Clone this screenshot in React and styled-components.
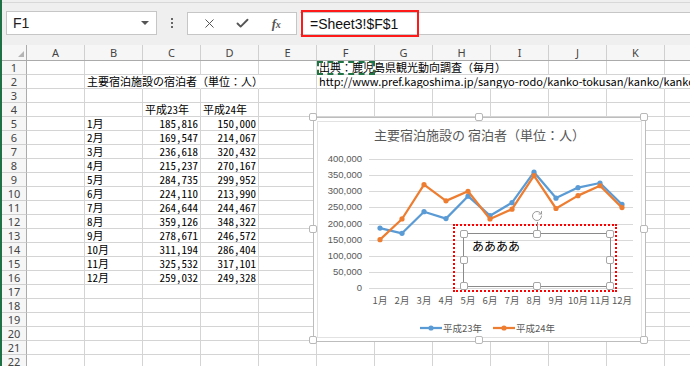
import React from 'react';
import styled, { createGlobalStyle } from 'styled-components';
import { X, Check, RotateCw } from 'lucide-react';

const Global = createGlobalStyle`
  html, body { margin: 0; padding: 0; background: #fff; }
  body { font-family: "Noto Sans CJK JP", "Noto Sans", sans-serif; }
`;

const Page = styled.div`
  position: relative;
  width: 690px;
  height: 366px;
  overflow: hidden;
  box-sizing: border-box;
  border-left: 2px solid #1e7145;
  background: #fff;
`;

/* ---------- formula bar ---------- */
const TopArea = styled.div`
  height: 45px;
  box-sizing: border-box;
  padding-top: 2px;
  background: #efefef;
`;

const FormulaBar = styled.div`
  height: 43px;
  box-sizing: border-box;
  border-top: 1px solid #d8d8d8;
  display: flex;
  align-items: flex-start;
  padding: 8px 0 0 4px;
`;

const NameBox = styled.div`
  width: 151px;
  height: 24px;
  box-sizing: border-box;
  background: #fff;
  border: 1px solid #c6c6c6;
  display: flex;
  align-items: center;
  justify-content: space-between;
  padding: 0 7px 0 6px;
  font: 14px "Liberation Sans", sans-serif;
  color: #222;
`;

const DropArrow = styled.span`
  width: 0;
  height: 0;
  border-left: 4px solid transparent;
  border-right: 4px solid transparent;
  border-top: 4px solid #555;
`;

const Grip = styled.div`
  width: 30px;
  height: 24px;
  display: flex;
  flex-direction: column;
  align-items: center;
  justify-content: center;
  gap: 2px;
`;

const GripDot = styled.span`
  width: 2px;
  height: 2px;
  background: #666;
`;

const ButtonBox = styled.div`
  margin-top: 1px;
  width: 110px;
  height: 23px;
  box-sizing: border-box;
  background: #fff;
  border: 1px solid #c6c6c6;
  display: grid;
  grid-template-columns: 42px 24px 44px;
  align-items: center;
  justify-items: center;
  color: #555;
`;

const FxLabel = styled.span`
  font: italic bold 13px "Liberation Serif", serif;
  color: #555;
  letter-spacing: -0.5px;
  & small { font-size: 10px; }
`;

const FormulaInput = styled.div`
  position: relative;
  flex: 1;
  margin: 1px 0 0 3px;
  height: 23px;
  box-sizing: border-box;
  background: #fff;
  border-top: 1px solid #c6c6c6;
  border-bottom: 1px solid #c6c6c6;
  display: flex;
  align-items: center;
  padding-left: 10px;
  font: 14px "Liberation Sans", sans-serif;
  color: #111;
`;

const RedMark = styled.div`
  position: absolute;
  left: 1px;
  top: -3px;
  width: 118px;
  height: 27px;
  box-sizing: border-box;
  border: 2px solid #ff1a1a;
`;

/* ---------- sheet ---------- */
const Row = styled.div`
  display: flex;
  height: ${(p) => (p.$header ? 16 : 14)}px;
  box-sizing: border-box;
  background: ${(p) => (p.$header ? '#f6f6f6' : 'transparent')};
  border-bottom: ${(p) => (p.$header ? '1px solid #ababab' : 'none')};
`;

const Corner = styled.div`
  position: relative;
  flex: none;
  width: 25px;
  box-sizing: border-box;
  border-right: 1px solid #ababab;
  &::after {
    content: '';
    position: absolute;
    right: 2px;
    bottom: 3px;
    border-left: 6px solid transparent;
    border-bottom: 6px solid #b4b4b4;
  }
`;

const ColHeader = styled.div`
  flex: none;
  width: 58px;
  box-sizing: border-box;
  border-right: 1px solid #d0d0d0;
  text-align: center;
  font: 11px/15px "Noto Sans", sans-serif;
  color: #444;
`;

const RowHeader = styled.div`
  flex: none;
  width: 25px;
  box-sizing: border-box;
  background: #f6f6f6;
  border-right: 1px solid #ababab;
  border-bottom: 1px solid #d0d0d0;
  text-align: center;
  font: 11px/13px "Noto Sans", sans-serif;
  color: #444;
`;

const Cell = styled.div`
  flex: none;
  width: 58px;
  height: 14px;
  box-sizing: border-box;
  border-right: 1px solid ${(p) => (p.$open ? 'transparent' : '#d4d4d4')};
  border-bottom: 1px solid #d4d4d4;
  padding: 0 2px;
  text-align: ${(p) => p.$align || 'left'};
  font-size: 11px;
  line-height: 13px;
  font-family: "Noto Sans CJK JP", sans-serif;
  font-feature-settings: ${(p) => (p.$num ? '"hwid"' : 'normal')};
  color: #000;
  white-space: nowrap;
  overflow: visible;
  outline: ${(p) => (p.$marquee ? '2px dashed #217346' : 'none')};
  outline-offset: -2px;
`;

/* ---------- chart ---------- */
const ChartFrame = styled.div`
  position: absolute;
  left: 311px;
  top: 117px;
  width: 333px;
  height: 225px;
  box-sizing: border-box;
  border: 1px solid #bdbdbd;
  background: #fff;
  box-shadow: inset 0 0 0 3px #fff, inset 0 0 0 4px #e2e2e2;
  display: flex;
  flex-direction: column;
`;

const ChartTitle = styled.div`
  height: 36px;
  line-height: 33px;
  text-align: center;
  font-size: 13px;
  font-family: "Noto Sans CJK JP", sans-serif;
  color: #595959;
  white-space: pre;
`;

const PlotSvg = styled.svg`
  display: block;
  flex: none;
`;

const AxisNum = styled.text`
  font-family: "Liberation Sans", sans-serif;
  font-size: 9.5px;
  fill: #595959;
`;

const AxisCat = styled.text`
  font-family: "Noto Sans CJK JP", sans-serif;
  font-size: 9.5px;
  fill: #595959;
`;

const Legend = styled.div`
  height: 27px;
  display: flex;
  align-items: center;
  justify-content: center;
  gap: 11px;
  padding-left: 16px;
`;

const LegendItem = styled.div`
  display: flex;
  align-items: center;
  gap: 1px;
  font-size: 9.5px;
  font-family: "Noto Sans CJK JP", sans-serif;
  color: #595959;
`;

const Handle = styled.span`
  position: absolute;
  left: calc(${(p) => p.$x}% - ${(p) => p.$off || 4}px);
  top: calc(${(p) => p.$y}% - ${(p) => p.$off || 4}px);
  width: 8px;
  height: 8px;
  box-sizing: border-box;
  background: #fff;
  border: 1.5px solid ${(p) => p.$color || '#a6a6a6'};
  border-radius: 2px;
`;

const SelectionBox = styled.div`
  position: absolute;
  left: 139px;
  top: 106px;
  width: 164px;
  height: 68px;
  box-sizing: border-box;
  border: 2px dotted #ff0000;
`;

const Shape = styled.div`
  position: absolute;
  left: 8px;
  top: 7px;
  width: 148px;
  height: 54px;
  box-sizing: border-box;
  border: 1px solid #8a8a8a;
`;

const ShapeText = styled.div`
  padding: 5px 0 0 8px;
  font-size: 12px;
  line-height: 14px;
  font-family: "Noto Sans CJK JP", sans-serif;
  color: #000;
`;

const RotateHandle = styled.div`
  position: absolute;
  left: 50%;
  top: -24px;
  transform: translateX(-50%);
  display: flex;
  flex-direction: column;
  align-items: center;
  color: #9a9a9a;
`;

const Stem = styled.span`
  width: 1px;
  height: 8px;
  background: #8a8a8a;
`;

/* ---------- data ---------- */
const COLS = 'ABCDEFGHIJKL'.split('');
const V23 = [185816, 169547, 236618, 215237, 284735, 224110, 264644, 359126, 278671, 311194, 325532, 259032];
const V24 = [150000, 214067, 320432, 270167, 299952, 213990, 244467, 348322, 246572, 286404, 317101, 249328];
const fmt = (n) => n.toLocaleString('en-US');
const OPEN = { 1: ['F', 'G', 'H'], 2: ['B', 'C', 'D', 'F', 'G', 'H', 'I', 'J', 'K'] };

function rowCells(r) {
  const m = {};
  if (r === 1) m.F = { text: '出典：鹿児島県観光動向調査（毎月）', marquee: true };
  if (r === 2) {
    m.B = { text: '主要宿泊施設の宿泊者（単位：人）' };
    m.F = { text: 'http://www.pref.kagoshima.jp/sangyo-rodo/kanko-tokusan/kanko/kanko' };
  }
  if (r === 4) {
    m.C = { text: '平成23年', num: true };
    m.D = { text: '平成24年', num: true };
  }
  if (r >= 5 && r <= 16) {
    const i = r - 5;
    m.B = { text: `${i + 1}月`, num: true };
    m.C = { text: fmt(V23[i]), align: 'right', num: true };
    m.D = { text: fmt(V24[i]), align: 'right', num: true };
  }
  return m;
}

const yOf = (v) => 134 - (v / 400000) * 129;
const xOf = (i) => 66 + 22 * i;
const pts = (arr) => arr.map((v, i) => `${xOf(i)},${yOf(v).toFixed(1)}`).join(' ');
const BLUE = '#5b9bd5';
const ORANGE = '#ed7d31';

function Series({ data, color }) {
  return (
    <g>
      <polyline points={pts(data)} fill="none" stroke={color} strokeWidth="2.25" strokeLinejoin="round" strokeLinecap="round" />
      {data.map((v, i) => (
        <circle key={i} cx={xOf(i)} cy={yOf(v)} r="2.6" fill={color} />
      ))}
    </g>
  );
}

function LegendKey({ color }) {
  return (
    <svg width="22" height="8" viewBox="0 0 22 8">
      <line x1="0" y1="4" x2="22" y2="4" stroke={color} strokeWidth="2.25" />
      <circle cx="11" cy="4" r="2.6" fill={color} />
    </svg>
  );
}

const FRAME_HANDLES = [
  [0, 0], [50, 0], [100, 0], [0, 50], [100, 50], [0, 100], [50, 100], [100, 100],
];

function Chart() {
  const grid = Array.from({ length: 9 }, (_, k) => Math.round(134 - k * 16.125));
  return (
    <ChartFrame>
      <ChartTitle>{'主要宿泊施設の 宿泊者（単位：人）'}</ChartTitle>
      <PlotSvg width="331" height="160" viewBox="0 0 331 160">
        {grid.map((y, k) => (
          <g key={k}>
            <line x1="55" x2="319" y1={y + 0.5} y2={y + 0.5} stroke="#d9d9d9" strokeWidth="1" />
            <AxisNum x="48" y={y + 0.5} textAnchor="end" dominantBaseline="middle">
              {fmt(k * 50000)}
            </AxisNum>
          </g>
        ))}
        {V23.map((_, i) => (
          <AxisCat key={i} x={xOf(i)} y="147" textAnchor="middle" dominantBaseline="middle">
            {`${i + 1}月`}
          </AxisCat>
        ))}
        <Series data={V23} color={BLUE} />
        <Series data={V24} color={ORANGE} />
      </PlotSvg>
      <Legend>
        <LegendItem>
          <LegendKey color={BLUE} />
          平成23年
        </LegendItem>
        <LegendItem>
          <LegendKey color={ORANGE} />
          平成24年
        </LegendItem>
      </Legend>
      {FRAME_HANDLES.map(([x, y], i) => (
        <Handle key={i} $x={x} $y={y} $off={5} $color="#b8b8b8" />
      ))}
      <SelectionBox>
        <Shape>
          <ShapeText>ああああ</ShapeText>
          <RotateHandle>
            <RotateCw size={12} strokeWidth={2} />
            <Stem />
          </RotateHandle>
          {FRAME_HANDLES.map(([x, y], i) => (
            <Handle key={i} $x={x} $y={y} />
          ))}
        </Shape>
      </SelectionBox>
    </ChartFrame>
  );
}

export default function App() {
  const rows = Array.from({ length: 22 }, (_, i) => i + 1);
  return (
    <Page>
      <Global />
      <TopArea>
        <FormulaBar>
          <NameBox>
            F1
            <DropArrow />
          </NameBox>
          <Grip>
            <GripDot />
            <GripDot />
            <GripDot />
          </Grip>
          <ButtonBox>
            <X size={15} strokeWidth={1.6} />
            <Check size={15} strokeWidth={3} />
            <FxLabel>
              f<small>x</small>
            </FxLabel>
          </ButtonBox>
          <FormulaInput>
            <RedMark />
            =Sheet3!$F$1
          </FormulaInput>
        </FormulaBar>
      </TopArea>
      <Row $header>
        <Corner />
        {COLS.map((c) => (
          <ColHeader key={c}>{c}</ColHeader>
        ))}
      </Row>
      {rows.map((r) => {
        const data = rowCells(r);
        const open = OPEN[r] || [];
        return (
          <Row key={r}>
            <RowHeader>{r}</RowHeader>
            {COLS.map((c) => {
              const d = data[c];
              return (
                <Cell
                  key={c}
                  $open={open.includes(c)}
                  $align={d && d.align}
                  $marquee={d && d.marquee}
                  $num={d && d.num}
                >
                  {d ? d.text : ''}
                </Cell>
              );
            })}
          </Row>
        );
      })}
      <Chart />
    </Page>
  );
}
